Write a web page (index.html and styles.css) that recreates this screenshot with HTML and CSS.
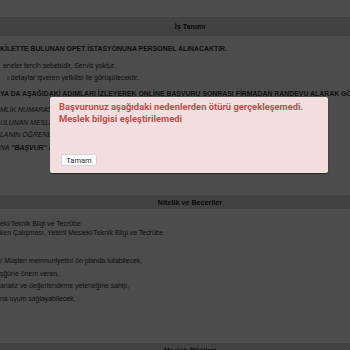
FILE: index.html
```html
<!DOCTYPE html>
<html lang="tr">
<head>
<meta charset="utf-8">
<title>İş Tanımı</title>
<link rel="stylesheet" href="styles.css">
</head>
<body>
<div class="page">
  <div class="bar bar-top">İş Tanımı</div>
  <div class="section s1">
    <p class="bold l1">KİLETTE BULUNAN OPET İSTASYONUNA PERSONEL ALINACAKTIR.</p>
    <p class="l2">eneler tercih sebebidir. Servis yoktur.</p>
    <p class="l3">ı detaylar işveren yetkilisi ile görüşülecektir.</p>
    <p class="bold l4">YA DA AŞAĞIDAKİ ADIMLARI İZLEYEREK ONLİNE BAŞVURU SONRASI FİRMADAN RANDEVU ALARAK GÖRÜŞMEYE GELİNİZ</p>
    <ul class="steps">
      <li>MLİK NUMARASI İLE SİSTEME GİRİŞ YAPINIZ</li>
      <li>ULUNAN MESLEK BİLGİLERİNİ GÜNCELLEYİNİZ</li>
      <li>LANIN ÖĞRENİM DURUMUNU KONTROL EDİNİZ</li>
      <li>NA <b>"BAŞVUR"</b> BUTONUNA TIKLAYINIZ</li>
    </ul>
  </div>
  <div class="bar bar-mid">Nitelik ve Beceriler</div>
  <div class="section s2">
    <p class="tight">eki/Teknik Bilgi ve Tecrübe</p>
    <p class="tight">ken Çalışması, Yeterli Mesleki/Teknik Bilgi ve Tecrübe</p>
    <ul class="traits">
      <li>r Müşteri memnuniyetini ön planda tutabilecek,</li>
      <li>şğüne önem veren,</li>
      <li>analiz ve değerlendirme yeteneğine sahip,</li>
      <li>na uyum sağlayabilecek,</li>
    </ul>
  </div>
  <div class="bar bar-bottom">Meslek Bilgileri</div>
</div>
<div class="overlay"></div>
<div class="modal">
  <p class="msg">Başvurunuz aşağıdaki nedenlerden ötürü gerçekleşemedi.</p>
  <p class="msg">Meslek bilgisi eşleştirilemedi</p>
  <button class="btn">Tamam</button>
</div>
</body>
</html>
```
FILE: styles.css
```css
html, body {
  margin: 0;
  padding: 0;
  width: 350px;
  height: 350px;
  overflow: hidden;
  background: #ffffff;
}
body {
  font-family: "Liberation Sans", Arial, sans-serif;
  font-size: 6.9px;
  color: #333;
  position: relative;
}
.page {
  width: 380px;
  padding-top: 17px;
  white-space: nowrap;
}
.bar {
  background: #dedede;
  font-weight: bold;
  text-align: center;
  color: #222;
  font-size: 7.2px;
  display: flex;
  align-items: center;
  justify-content: center;
}
.bar-top { height: 19px; }
.bar-mid { height: 14px; }
.bar-bottom { height: 14px; }
p { margin: 0; }
ul { margin: 0; padding: 0; list-style: none; }
.s1 { padding-top: 7px; height: 152px; }
.s1 p { line-height: 12px; }
.s1 .l2 { margin-top: 5px; padding-left: 3px; }
.s1 .l3 { padding-left: 7px; }
.s1 .l4 { margin-top: 4px; }
.bold { font-weight: bold; }
.steps { margin-top: 4px; font-style: italic; }
.steps li { line-height: 12.7px; }
.s2 { padding-top: 9.5px; height: 124.5px; }
.tight { line-height: 9px; }
.traits { margin-top: 18.5px; }
.traits li { line-height: 12.7px; }
.overlay {
  position: absolute;
  inset: 0;
  background: rgba(0, 0, 0, 0.7);
}
.modal {
  position: absolute;
  left: 50px;
  top: 97px;
  width: 278px;
  height: 76px;
  box-sizing: border-box;
  background: #f2dede;
  border-radius: 2px;
  box-shadow: 0 1px 1px rgba(0,0,0,0.45);
  padding: 4px 9px 0 9px;
  display: flex;
  flex-direction: column;
  align-items: flex-start;
}
.msg {
  font-family: Roboto, "Liberation Sans", sans-serif;
  font-weight: bold;
  font-size: 9.4px;
  line-height: 12px;
  color: #bf4f4d;
  white-space: nowrap;
}
.btn {
  margin-top: 29px;
  margin-left: 2px;
  width: 36px;
  height: 12px;
  padding: 0;
  font-family: Roboto, "Liberation Sans", sans-serif;
  font-size: 7.5px;
  color: #333;
  background: #fafafa;
  border: 1px solid #d6d6d6;
  border-radius: 2px;
}
```
